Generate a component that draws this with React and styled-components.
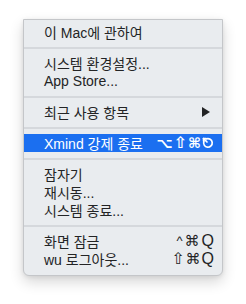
import React from "react";
import styled, { createGlobalStyle } from "styled-components";

const Global = createGlobalStyle`
    html, body {
        margin: 0;
        background: #ffffff;
    }
    body {
        font-family: "Liberation Sans", "Noto Sans CJK KR", sans-serif;
    }
`;

const Page = styled.div`
    padding: 19px 0 0 23px;
    width: 246px;
    height: 304px;
    box-sizing: border-box;
`;

const Menu = styled.div`
    width: 200px;
    box-sizing: border-box;
    background: #e9ecef;
    border: 1px solid #c4c6c9;
    border-radius: 0 0 6px 6px;
    box-shadow: 0 6px 14px rgba(0, 0, 0, 0.16), 0 1px 4px rgba(0, 0, 0, 0.08);
    padding: 3px 0 7px;
`;

const Item = styled.div`
    height: 18px;
    display: flex;
    align-items: center;
    justify-content: space-between;
    padding: 0 8px 0 20px;
    font-size: 14px;
    color: ${(p) => (p.active ? "#ffffff" : "#232425")};
    background: ${(p) => (p.active ? "#1b6ff0" : "transparent")};
    white-space: nowrap;
`;

const Label = styled.span`
    letter-spacing: 0;
`;

const Keys = styled.span`
    display: flex;
    align-items: center;
    gap: ${(p) => p.gap || 0}px;
`;

const Key = styled.span`
    font-family: ${(p) => (p.latin ? '"Liberation Sans", sans-serif' : '"DejaVu Sans", sans-serif')};
    font-size: ${(p) => p.size || 15}px;
    font-weight: ${(p) => (p.bold ? 700 : 400)};
    line-height: 18px;
`;

const Separator = styled.div`
    height: 13px;
    display: flex;
    align-items: center;
    &::after {
        content: "";
        display: block;
        width: 100%;
        height: 2px;
        background: #d5d8dc;
    }
`;

const Arrow = styled.span`
    width: 0;
    height: 0;
    margin-right: 4px;
    border-top: 5px solid transparent;
    border-bottom: 5px solid transparent;
    border-left: 8px solid #232425;
`;

function EscapeIcon() {
    return (
        <svg width="12" height="12" viewBox="0 0 12 12" fill="none" stroke="#ffffff" strokeWidth="1.7" strokeLinecap="round">
            <path d="M4.4 1.9 A4.3 4.3 0 1 1 1.9 4.4" />
            <path d="M1.6 1.6 L5 5" />
            <path d="M1.6 1.6 L1.6 4" />
            <path d="M1.6 1.6 L4 1.6" />
        </svg>
    );
}

export default function App() {
    return (
        <Page>
            <Global />
            <Menu>
                <Item><Label>이 Mac에 관하여</Label></Item>
                <Separator />
                <Item><Label>시스템 환경설정...</Label></Item>
                <Item><Label>App Store...</Label></Item>
                <Separator />
                <Item><Label>최근 사용 항목</Label><Arrow /></Item>
                <Separator />
                <Item active>
                    <Label>Xmind 강제 종료</Label>
                    <Keys gap={1}>
                        <Key bold size={14}>⌥</Key>
                        <Key bold size={16}>⇧</Key>
                        <Key bold size={14}>⌘</Key>
                        <EscapeIcon />
                    </Keys>
                </Item>
                <Separator />
                <Item><Label>잠자기</Label></Item>
                <Item><Label>재시동...</Label></Item>
                <Item><Label>시스템 종료...</Label></Item>
                <Separator />
                <Item>
                    <Label>화면 잠금</Label>
                    <Keys gap={2}>
                        <Key latin size={13}>^</Key>
                        <Key>⌘</Key>
                        <Key latin size={16}>Q</Key>
                    </Keys>
                </Item>
                <Item>
                    <Label>wu 로그아웃...</Label>
                    <Keys gap={1}>
                        <Key size={16}>⇧</Key>
                        <Key>⌘</Key>
                        <Key latin size={16}>Q</Key>
                    </Keys>
                </Item>
            </Menu>
        </Page>
    );
}
